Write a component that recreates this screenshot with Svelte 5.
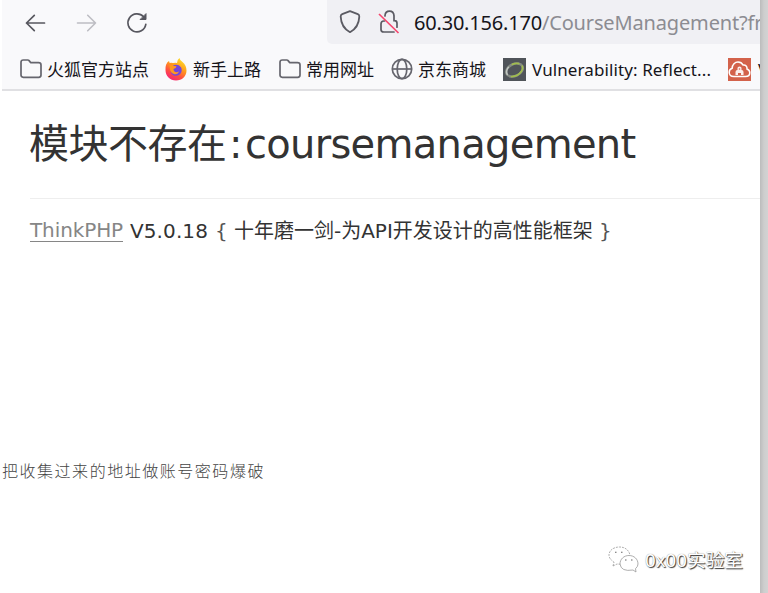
<script>
  const title = '模块不存在';
</script>

{#snippet folder()}
  <svg width="22" height="20" viewBox="0 0 22 20" fill="none" stroke="#66666e" stroke-width="1.7" stroke-linejoin="round">
    <path d="M3.3 1h4.5q.8 0 1.3.6l1.2 1.5q.5.6 1.2.6h7q2.5 0 2.5 2.3v10q0 2.3-2.3 2.3H3.3Q1 18.300 1 16V3.300Q1 1 3.300 1z" />
  </svg>
{/snippet}

<div class="screen">
  <main>
    <nav class="toolbar">
      <svg class="nav-icon" width="22" height="20" viewBox="0 0 22 20" fill="none" stroke="#57575f" stroke-width="1.7" stroke-linecap="round" stroke-linejoin="round"><path d="M19.500 10H1.500M9.300 2.300L1.500 10l7.800 7.700" /></svg>
      <svg class="nav-icon forward" width="22" height="20" viewBox="0 0 22 20" fill="none" stroke="#bdbdc3" stroke-width="1.6" stroke-linecap="round" stroke-linejoin="round"><path d="M1.500 10h18M11.700 2.300l7.800 7.700-7.800 7.700" /></svg>
      <svg class="nav-icon reload" width="22" height="22" viewBox="0 0 22 22" fill="none" stroke="#57575f" stroke-width="1.7" stroke-linecap="round"><path d="M17.600 4.800A9 9 0 1 0 19.800 12.300" /><path d="M20 2v5.500h-5.500z" fill="#57575f" stroke-width="1" stroke-linejoin="round" /></svg>
      <div class="address">
        <svg width="22" height="24" viewBox="0 0 22 24" fill="none" stroke="#5b5b63" stroke-width="1.800" stroke-linejoin="round"><path d="M11 1.200l7.800 3q1.600.6 1.500 2.400c-.3 7-3 12.200-9.300 15.600C4.700 18.800 2 13.600 1.700 6.600q0-1.800 1.500-2.400z" /></svg>
        <svg class="lock" width="22" height="24" viewBox="0 0 22 24" fill="none" stroke="#5b5b63" stroke-width="1.700"><path d="M7 6V5.500Q7.400 1.200 11.500 1.200T16 5.700v5h.5q2.500 0 2.500 2.500v4M6.500 11H5.800Q3 11 3 14v5.500Q3 22 5.800 22H16" stroke-linecap="round" /><path d="M1 4l19.500 19" stroke="#f6466e" /></svg>
        <span class="host">60.30.156.170</span><span class="path">/CourseManagement?fr</span>
      </div>
    </nav>
    <nav class="bookmarks">
      <div class="bookmark b1">{@render folder()}<span>火狐官方站点</span></div>
      <div class="bookmark b2">
        <svg width="22" height="23" viewBox="0 0 22 23">
          <defs>
            <linearGradient id="fire" x1=".8" y1="0" x2=".25" y2="1"><stop offset="0" stop-color="#ffe72e" /><stop offset=".4" stop-color="#ff9c1c" /><stop offset=".7" stop-color="#ff4f40" /><stop offset="1" stop-color="#f5207d" /></linearGradient>
          </defs>
          <path fill="url(#fire)" d="M1 7Q2 4 4 3l.7 2Q6 4.500 8 5q3-.3 4 0Q11.800 2 14.500 0q.3 2.500 3 4 4 3.500 4 8.500C21.500 18.500 17 22.500 11 22.500S.5 18 .5 12Q.3 9 1 7z" />
          <path fill="#7547db" d="M8 7.500q5-2 8 1.800c2 4-.5 8.500-4.800 8.500-3.200 0-5.500-2-5.500-4.800L8 12z" />
          <path fill="#ff9720" d="M4.500 7Q7 6 9 8l2.500.3q-.2 2-3 2.700 0 3 3 3.300 1.500 0 2.500-1-1 3.500-4.500 3-4-1-4.500-5z" />
        </svg><span>新手上路</span>
      </div>
      <div class="bookmark b3">{@render folder()}<span>常用网址</span></div>
      <div class="bookmark b4">
        <svg width="22" height="22" viewBox="0 0 22 22" fill="none" stroke="#66666e" stroke-width="1.700"><circle cx="11" cy="11" r="9.700" /><ellipse cx="11" cy="11" rx="4.800" ry="9.700" /><path d="M1.500 11h19" /></svg><span>京东商城</span>
      </div>
      <div class="bookmark b5">
        <svg width="23" height="23" viewBox="0 0 23 23"><path fill="#50545a" d="M0 0h23v23H0z" /><g fill="none" transform="rotate(-25 11.500 12)" stroke-linecap="round"><ellipse cx="11.500" cy="12" rx="8.800" ry="6" stroke="#858b83" stroke-width="2.400" /><path d="M6 16.800q6 2.500 11-.5 3-2 3.200-4.500M12 6q4 0 6 2" stroke="#a1bd4c" stroke-width="1.700" /><path d="M3 13q0-4 4-6" stroke="#c3c8c5" stroke-width="1.500" /></g></svg><span>Vulnerability: Reflect...</span>
      </div>
      <div class="bookmark b6">
        <svg width="23" height="23" viewBox="0 0 23 23"><path fill="#d3624b" d="M0 0h23v23H0z" /><path d="M6 18.500c-3 0-4.800-1.800-4.800-4.300 0-2.200 1.200-3.400 3-4C4.200 6.500 7 4 10 4q3.500 0 5 3c2.800-.4 4.300 1.500 4 4 2 .8 2.800 2 2.800 3.700 0 2.300-1.700 3.800-4.300 3.800z" fill="none" stroke="#fff" stroke-width="1.500" /><path d="M7.500 17v-3q0-2 2-2V10q0-1.500 2-1.500t2 1.500v2q2 0 2 2v3h-2.500v-2h-3v2z" fill="#fff" fill-opacity=".9" /><circle cx="11.500" cy="11" r=".8" fill="#d3624b" /></svg><span>V</span>
      </div>
    </nav>
    <section class="error">
      <h1><span class="cn">{title}</span><span class="colon">:</span><span class="latin">coursemanagement</span></h1>
      <p class="framework"><a href="#thinkphp">ThinkPHP</a><b>V5.0.18</b><i>{'{'}</i><span class="slogan">十年磨一剑-为<b>API</b>开发设计的高性能框架</span><i class="close">{'}'}</i></p>
    </section>
    <p class="note">把收集过来的地址做账号密码爆破</p>
    <footer>
      <svg width="32" height="28" viewBox="0 0 32 28" fill="#fff" stroke="#999" stroke-width=".8"><path stroke-dasharray="2 1" d="M5 20l1-4Q1 13 1 9C1 4.500 5.500 1 11.500 1S21 4.500 22 9M5 20l4-2 4 .3" /><path d="M28 26l-3-2q-12 2-13-6C12 13 16 9.500 21 9.500S30 13 30 18q0 2.500-2.500 4.700z" /><path d="M7 6.200h1.500m4.500 0h1.500M17 14h1.500m4.500 0h1.500" stroke="#666" stroke-width="1.100" /></svg>
      <span>0x00实验室</span>
    </footer>
  </main>
</div>

<style>
  :global(body) { margin: 0; background: #fff; }
  .screen { box-sizing: border-box; width: 768px; height: 593px; padding-left: 2px; overflow: hidden; background: linear-gradient(90deg, #fff 0 760px, #bcbcbc 760px, #cecece 764px, #d3d3d3); font-family: "Noto Sans", "Noto Sans CJK SC", sans-serif; }
  main { width: 758px; height: 593px; background: #fff; overflow: hidden; display: flex; flex-direction: column; }
  svg { flex: none; display: block; }
  .toolbar { flex: none; display: flex; align-items: center; height: 44px; background: #f9f9fb; }
  .nav-icon { position: relative; top: 1px; margin-left: 23px; }
  .forward { margin-left: 29px; }
  .reload { margin-left: 28px; }
  .address { display: flex; align-items: center; align-self: stretch; flex: 1; min-width: 0; margin-left: 179px; padding-left: 12px; background: #f0f0f4; border-radius: 0 0 0 5px; font-size: 20px; white-space: nowrap; overflow: hidden; }
  .lock { margin-left: 17px; }
  .host { width: 128px; margin-left: 14px; letter-spacing: -.2px; color: #15141a; }
  .path { color: #8c8c92; letter-spacing: -.15px; }
  .bookmarks { flex: none; display: flex; align-items: center; box-sizing: border-box; height: 47px; padding: 5px 0 0 18px; background: #f9f9fb; border-bottom: 2px solid #e0e0e3; overflow: hidden; }
  .bookmark { flex: none; display: flex; align-items: center; gap: 5px; height: 26px; font-size: 17px; line-height: 26px; color: #15141a; white-space: nowrap; }
  .bookmark span { padding-top: 2px; }
  .b1 { width: 145px; }
  .b2 { width: 114px; gap: 6px; }
  .b3 { width: 112px; }
  .b4 { width: 112px; }
  .b5 { width: 225px; gap: 6px; letter-spacing: .1px; }
  .b6 { gap: 7px; }
  .error { flex: none; height: 350px; padding-left: 28px; font-family: "DejaVu Sans", "Noto Sans CJK SC", sans-serif; color: #333; }
  h1 { display: flex; align-items: center; box-sizing: border-box; height: 108px; margin: 0; padding-bottom: 2px; border-bottom: 1px solid #eee; font-size: 40px; font-weight: 400; line-height: 60px; white-space: nowrap; }
  .cn { width: 200px; letter-spacing: -.5px; margin-left: -1px; }
  .colon { width: 16px; }
  .latin { letter-spacing: -.7px; }
  .framework { display: flex; align-items: center; height: 34px; margin: 15px 0 0; font-size: 20px; line-height: 34px; white-space: nowrap; }
  .framework b { font-weight: 400; }
  a { width: 93px; height: 21px; line-height: 21px; color: #868686; text-decoration: none; border-bottom: 1px solid #868686; letter-spacing: -.1px; }
  .framework > b { width: 79px; margin-left: 7px; letter-spacing: .1px; }
  .framework i { width: 12px; margin-left: 6px; font-style: normal; color: #555; }
  .slogan { width: 360px; margin-left: 7px; letter-spacing: -.01px; }
  .framework .close { margin-left: 5px; }
  .note { flex: none; margin: 13px 0 0; height: 32px; font: 16px/32px "Noto Sans CJK SC", sans-serif; font-weight: 300; letter-spacing: 1.530px; color: #444; }
  footer { display: flex; align-items: center; gap: 5px; height: 32px; margin: 56px 0 0 606px; font-size: 18.700px; color: #fff; text-shadow: 1px 1px 1px #333, 0 0 1px #888; white-space: nowrap; }
  footer svg { position: relative; top: 2px; }
</style>
